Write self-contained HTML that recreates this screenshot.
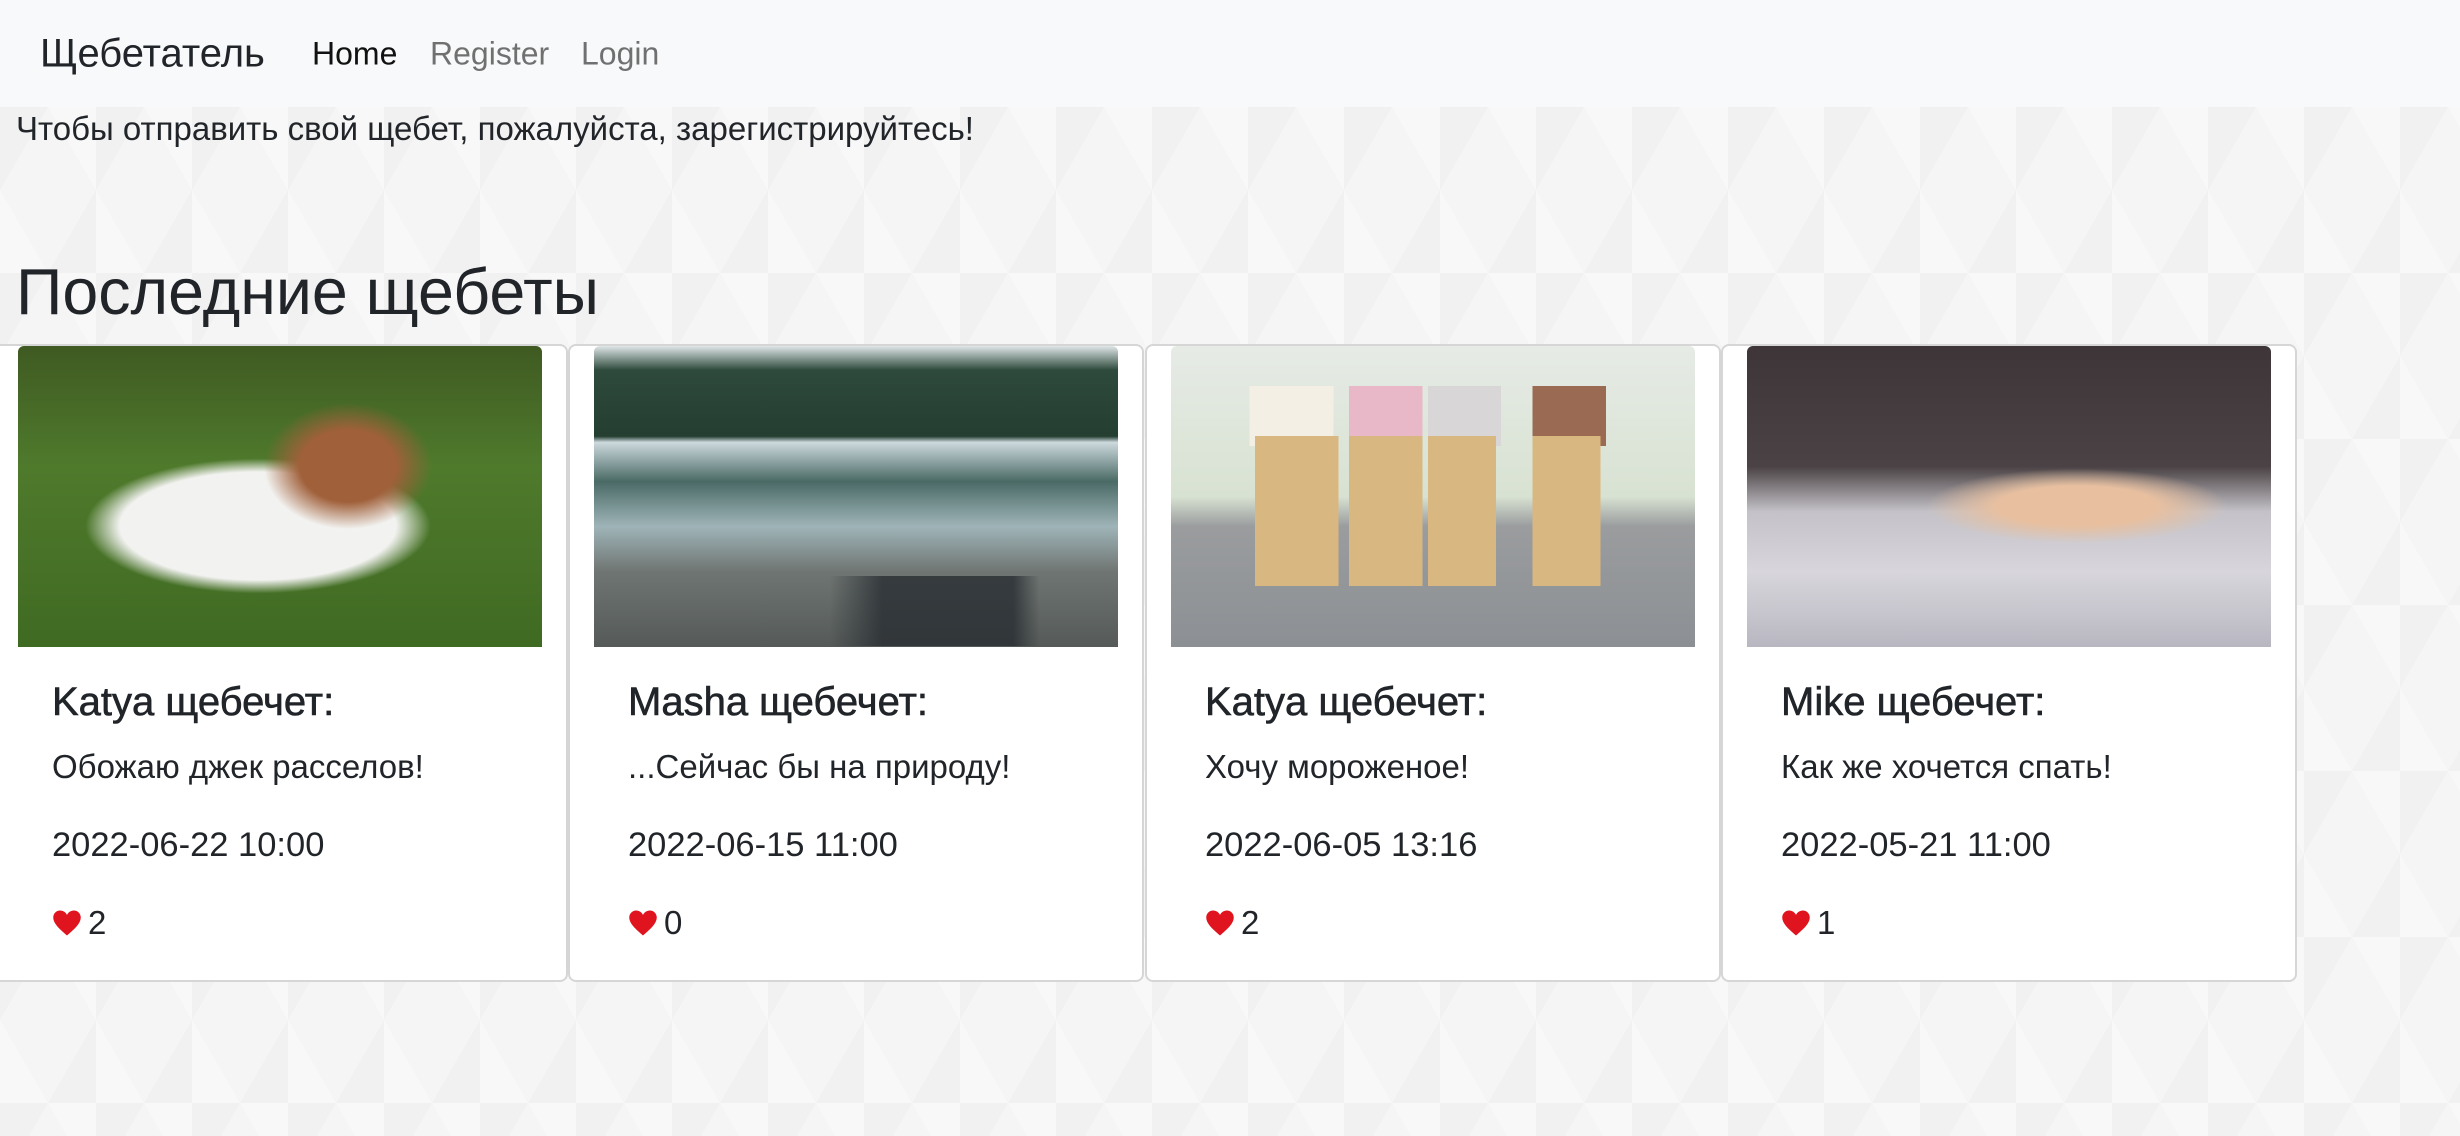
<!DOCTYPE html>
<html><head><meta charset="utf-8"><style>
*{margin:0;padding:0;box-sizing:border-box}
body{width:2460px;height:1136px;overflow:hidden;background:#f3f3f3;font-family:"Liberation Sans","Noto Sans CJK SC",sans-serif;color:#212529;position:relative}
.bg{position:absolute;inset:107px 0 0 0;background:
linear-gradient(60deg,rgba(255,255,255,.35) 25%,transparent 25%,transparent 75%,rgba(255,255,255,.35) 75%) 0 0/96px 166px,
linear-gradient(120deg,rgba(235,235,235,.4) 25%,transparent 25%,transparent 75%,rgba(235,235,235,.4) 75%) 0 0/96px 166px,#f5f5f5}
.nav{position:absolute;left:0;top:0;width:2460px;height:107px;background:#f8f9fa}
.nav span{position:absolute;top:50%;transform:translateY(-50%);white-space:nowrap}
.brand{left:40px;font-size:40px;color:#212529}
.nl{font-size:32px;color:rgba(0,0,0,.55)}
.t{position:absolute;white-space:nowrap}
.card{position:absolute;top:344px;width:576px;height:638px;background:#fff;border:2px solid #d6d6d6;border-radius:8px}
.img{position:absolute;left:24px;top:0;width:524px;height:301px;border-radius:6px 6px 0 0;overflow:hidden}
.card .t{left:58px}
.ti{top:334px;font-size:40px;-webkit-text-stroke:.6px #212529}
.bd{top:402px;font-size:33px}
.dt{top:480px;font-size:34.5px}
.lk{top:558px;font-size:33px;display:flex;align-items:center;gap:6px}
</style></head><body>
<div class="bg"></div>
<div class="nav"><span class="brand">Щебетатель</span><span class="nl" style="left:312px;color:#111">Home</span><span class="nl" style="left:430px">Register</span><span class="nl" style="left:581px">Login</span></div>
<div class="t" style="left:16px;top:110px;font-size:33px">Чтобы отправить свой щебет, пожалуйста, зарегистрируйтесь!</div>
<div class="t" style="left:16px;top:255px;font-size:64.5px">Последние щебеты</div>

<div class="card" style="left:-8px"><div class="img" style="background:radial-gradient(ellipse 120px 90px at 330px 120px,#a0603a 40%,transparent 70%),radial-gradient(ellipse 230px 90px at 240px 180px,#f2f2f0 60%,transparent 75%),linear-gradient(#3f5a22,#4f7a2c 40%,#3f6a22)"></div>
<div class="t ti">Katya щебечет:</div><div class="t bd">Обожаю джек расселов!</div><div class="t dt">2022-06-22 10:00</div><div class="t lk"><svg width="30" height="30" viewBox="0 0 24 24"><path d="M12 22C5 16 1 12 1 7.5 1 4.5 3.5 2 6.5 2 9 2 11 3.5 12 5.5 13 3.5 15 2 17.5 2 20.5 2 23 4.5 23 7.5 23 12 19 16 12 22z" fill="#e0141e"/></svg>2</div></div>

<div class="card" style="left:568px"><div class="img" style="background:linear-gradient(90deg,transparent 45%,rgba(40,45,50,.8) 55%,rgba(40,45,50,.8) 80%,transparent 85%) 0 230px/100% 70px no-repeat,linear-gradient(#dfe6e8 0,#2e4a3c 8%,#243e32 30%,#cdd9dd 32%,#4a6a66 45%,#9fb4b8 60%,#6f7572 75%,#555a58 100%)"></div>
<div class="t ti">Masha щебечет:</div><div class="t bd">...Сейчас бы на природу!</div><div class="t dt">2022-06-15 11:00</div><div class="t lk"><svg width="30" height="30" viewBox="0 0 24 24"><path d="M12 22C5 16 1 12 1 7.5 1 4.5 3.5 2 6.5 2 9 2 11 3.5 12 5.5 13 3.5 15 2 17.5 2 20.5 2 23 4.5 23 7.5 23 12 19 16 12 22z" fill="#e0141e"/></svg>0</div></div>

<div class="card" style="left:1145px"><div class="img" style="background:linear-gradient(90deg,transparent 16%,#d9b780 16%,#d9b780 32%,transparent 32%,transparent 34%,#d9b780 34%,#d9b780 48%,transparent 48%,transparent 49%,#d9b780 49%,#d9b780 62%,transparent 62%,transparent 69%,#d9b780 69%,#d9b780 82%,transparent 82%) 0 90px/100% 150px no-repeat,linear-gradient(90deg,transparent 15%,#f4efe4 15%,#f4efe4 31%,transparent 31%,transparent 34%,#e8b8c8 34%,#e8b8c8 48%,transparent 48%,transparent 49%,#d8d6d6 49%,#d8d6d6 63%,transparent 63%,transparent 69%,#9a6a52 69%,#9a6a52 83%,transparent 83%) 0 40px/100% 60px no-repeat,linear-gradient(#e6ebe6,#d8e2d2 50%,#9a9c9e 60%,#8c9094)"></div>
<div class="t ti">Katya щебечет:</div><div class="t bd">Хочу мороженое!</div><div class="t dt">2022-06-05 13:16</div><div class="t lk"><svg width="30" height="30" viewBox="0 0 24 24"><path d="M12 22C5 16 1 12 1 7.5 1 4.5 3.5 2 6.5 2 9 2 11 3.5 12 5.5 13 3.5 15 2 17.5 2 20.5 2 23 4.5 23 7.5 23 12 19 16 12 22z" fill="#e0141e"/></svg>2</div></div>

<div class="card" style="left:1721px"><div class="img" style="background:radial-gradient(ellipse 200px 50px at 330px 160px,#e8c0a0 40%,transparent 75%),linear-gradient(#3e3538,#4a4244 40%,#c4c2c8 55%,#d8d6dc 75%,#b8b6c0)"></div>
<div class="t ti">Mike щебечет:</div><div class="t bd">Как же хочется спать!</div><div class="t dt">2022-05-21 11:00</div><div class="t lk"><svg width="30" height="30" viewBox="0 0 24 24"><path d="M12 22C5 16 1 12 1 7.5 1 4.5 3.5 2 6.5 2 9 2 11 3.5 12 5.5 13 3.5 15 2 17.5 2 20.5 2 23 4.5 23 7.5 23 12 19 16 12 22z" fill="#e0141e"/></svg>1</div></div>
</body></html>
